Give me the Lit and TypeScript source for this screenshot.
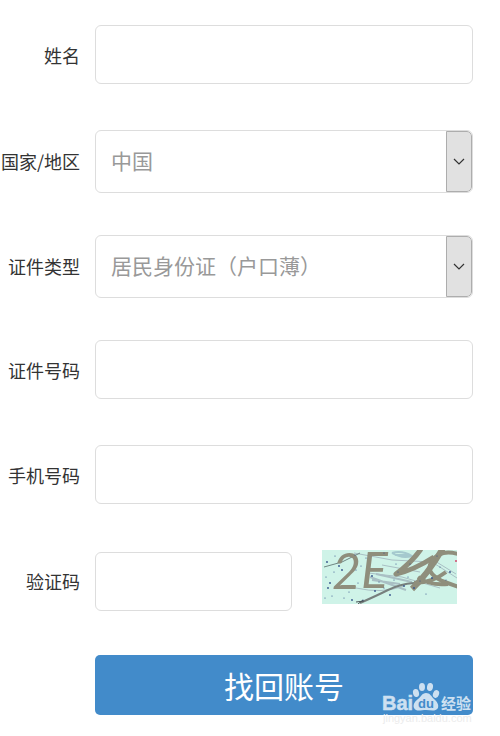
import { LitElement, html, css, svg } from "lit";
import { customElement } from "lit/decorators.js";

const specks = [
  [5, 12], [13, 6], [4, 27], [8, 33], [3, 48], [10, 46], [17, 16], [34, 20],
  [39, 16], [6, 38], [22, 48], [27, 42], [30, 50], [36, 33], [44, 8], [50, 26],
  [57, 32], [62, 38], [68, 45], [72, 30], [76, 22], [82, 36], [88, 14], [74, 14],
  [92, 38], [98, 31], [104, 44], [110, 28], [118, 17], [124, 30], [128, 22],
  [33, 5], [62, 3], [53, 41], [86, 27], [115, 6], [20, 20], [12, 22], [41, 50],
];

@customElement("captcha-image")
export class CaptchaImage extends LitElement {
  static styles = css`
    :host { display: block; flex: none; }
    svg { display: block; overflow: visible; }
    .char { font: italic 50px Lato, "Liberation Sans", sans-serif; fill: #8f8e7c; }
  `;

  render() {
    return html`
      <svg width="135" height="54" viewBox="0 0 135 54" role="img" aria-label="验证码图片">
        <clipPath id="frame"><rect width="135" height="54" /></clipPath>
        <rect width="135" height="54" fill="#cff3e8" />
        <g clip-path="url(#frame)">
          <g fill="none" stroke="#a9bfc4" stroke-width="1">
            <path d="M32 3 L70 10 L110 12 L135 28" />
            <path d="M46 23 L80 27 L118 38" />
            <path d="M50 30 L78 34 M48 27 L84 40 M54 24 L90 32" stroke-width="2" />
            <path d="M70 3 Q80 0 90 6 Q80 9 70 3 M73 5 H88" stroke-width="2" stroke="#a5c9ce" />
            <path d="M34 38 Q60 44 82 36" />
            <path d="M60 15 L98 22 M108 8 L134 24" />
          </g>
          <path d="M2 17 L20 12 L38 3" fill="none" stroke="#6f8582" stroke-width="1" />
          <path d="M38 53 Q54 46 66 40 T92 33" fill="none" stroke="#777f7d" stroke-width="2" />
          <path d="M34 52 l8 -1 M36 54 l5 -4" stroke="#4c5557" stroke-width="1" />
          <g fill="none" stroke="#8f8e7c" stroke-width="5" stroke-linejoin="round">
            <path d="M99 -1 Q90 12 74 24 Q92 20 112 7" />
            <path d="M121 -2 Q106 24 90 39" stroke-width="6" />
            <path d="M136 4 Q118 -1 110 11 Q102 22 120 31 L137 37" stroke-width="4" />
            <path d="M92 33 Q110 33 124 22 M96 27 Q108 36 126 34" stroke-width="4" />
          </g>
        </g>
        <text class="char" x="10" y="39">2</text>
        <text class="char" x="39" y="38">E</text>
        <g fill="#34518a">
          ${specks.map(([x, y], i) => svg`<circle cx=${x} cy=${y} r=${i % 3 ? 0.6 : 0.9} />`)}
        </g>
        <circle cx="134" cy="11" r="1" fill="#d0496c" />
      </svg>
    `;
  }
}

@customElement("site-mark")
export class SiteMark extends LitElement {
  static styles = css`
    :host { display: block; }
    svg { display: block; }
    .name { font: bold 20px "Liberation Sans", Arial, sans-serif; fill: #cde0f1; stroke: #cde0f1; stroke-width: 0.5px; }
    .cn { font: bold 15px "Noto Sans CJK SC", sans-serif; fill: #cde0f1; }
    .du { font: bold 13px "Liberation Sans", Arial, sans-serif; fill: #428bca; }
    .url { font: 11px "Liberation Sans", Arial, sans-serif; fill: #ececec; }
  `;

  render() {
    return html`
      <svg width="92" height="48" viewBox="0 0 92 48" aria-hidden="true">
        <text class="name" x="1" y="30">Bai</text>
        <g fill="#cde0f1">
          <ellipse cx="35" cy="13" rx="3" ry="4" transform="rotate(-12 35 13)" />
          <ellipse cx="41" cy="7" rx="3" ry="4" />
          <ellipse cx="49" cy="7" rx="3" ry="4" transform="rotate(10 49 7)" />
          <ellipse cx="55" cy="14" rx="3" ry="4" transform="rotate(20 55 14)" />
          <path d="M45 13 C41 13 40 17 37 19 C33 22 32 25 33 28 C35 32 40 30 45 30 C50 30 54 32 57 28 C58 24 56 22 53 19 C50 16 49 13 45 13 Z" />
        </g>
        <text class="du" x="37" y="28">du</text>
        <text class="cn" x="60" y="29">经验</text>
        <text class="url" x="2" y="42">jingyan.baidu.com</text>
      </svg>
    `;
  }
}

@customElement("app-root")
export class AppRoot extends LitElement {
  static styles = css`
    :host {
      display: block;
      background: #fff;
      color: #333;
      font-family: "Noto Sans CJK SC", sans-serif;
    }
    * { box-sizing: border-box; }
    form {
      display: grid;
      gap: 42px;
      padding: 25px 27px 21px 0;
    }
    .row {
      display: grid;
      grid-template-columns: 80px minmax(0, 1fr);
      column-gap: 15px;
      align-items: start;
      min-height: 63px;
    }
    label {
      font-size: 18px;
      line-height: 60px;
      text-align: right;
      white-space: nowrap;
    }
    .tall label { line-height: 62px; }
    input, .select {
      width: 100%;
      height: 59px;
      border: 1px solid #ddd;
      border-radius: 6px;
      background: #fff;
    }
    input {
      padding: 0 16px;
      font: inherit;
      font-size: 21px;
      color: #555;
    }
    .select {
      display: grid;
      grid-template-columns: minmax(0, 1fr) 26px;
      height: 63px;
      overflow: hidden;
    }
    select {
      grid-area: 1 / 1 / 2 / 3;
      appearance: none;
      border: 0;
      padding: 0 40px 4px 15px;
      background: transparent;
      font: inherit;
      font-size: 21px;
      color: #999;
    }
    .arrow {
      grid-area: 1 / 2;
      display: grid;
      place-items: center;
      border: 1px solid #adadad;
      border-radius: 0 5px 5px 0;
      background: #e1e1e1;
      pointer-events: none;
    }
    .code {
      display: flex;
      align-items: start;
      gap: 30px;
      padding-right: 16px;
    }
    .code input { flex: 1; min-width: 0; margin-top: 2px; }
    .action { position: relative; margin-left: 95px; }
    button {
      display: block;
      width: 100%;
      height: 60px;
      border: 0;
      border-radius: 5px;
      padding: 0;
      background: #428bca;
      color: #fff;
      font: inherit;
      font-size: 30px;
      line-height: 60px;
    }
    site-mark { position: absolute; right: 0; top: 25px; pointer-events: none; }
  `;

  private field(id: string, text: string) {
    return html`
      <div class="row">
        <label for=${id}>${text}</label>
        <input id=${id} type="text" />
      </div>
    `;
  }

  private choice(id: string, text: string, value: string) {
    return html`
      <div class="row tall">
        <label for=${id}>${text}</label>
        <div class="select">
          <select id=${id}><option>${value}</option></select>
          <span class="arrow">
            <svg width="12" height="8" viewBox="0 0 12 8" aria-hidden="true">
              <path d="M1 1 L6 6 L11 1" fill="none" stroke="#333" stroke-width="1.2" />
            </svg>
          </span>
        </div>
      </div>
    `;
  }

  render() {
    return html`
      <form>
        ${this.field("name", "姓名")}
        ${this.choice("region", "国家/地区", "中国")}
        ${this.choice("id-type", "证件类型", "居民身份证（户口薄）")}
        ${this.field("id-number", "证件号码")}
        ${this.field("phone", "手机号码")}
        <div class="row tall">
          <label for="code">验证码</label>
          <div class="code">
            <input id="code" type="text" />
            <captcha-image></captcha-image>
          </div>
        </div>
        <div class="action">
          <button type="button">找回账号</button>
          <site-mark></site-mark>
        </div>
      </form>
    `;
  }
}
